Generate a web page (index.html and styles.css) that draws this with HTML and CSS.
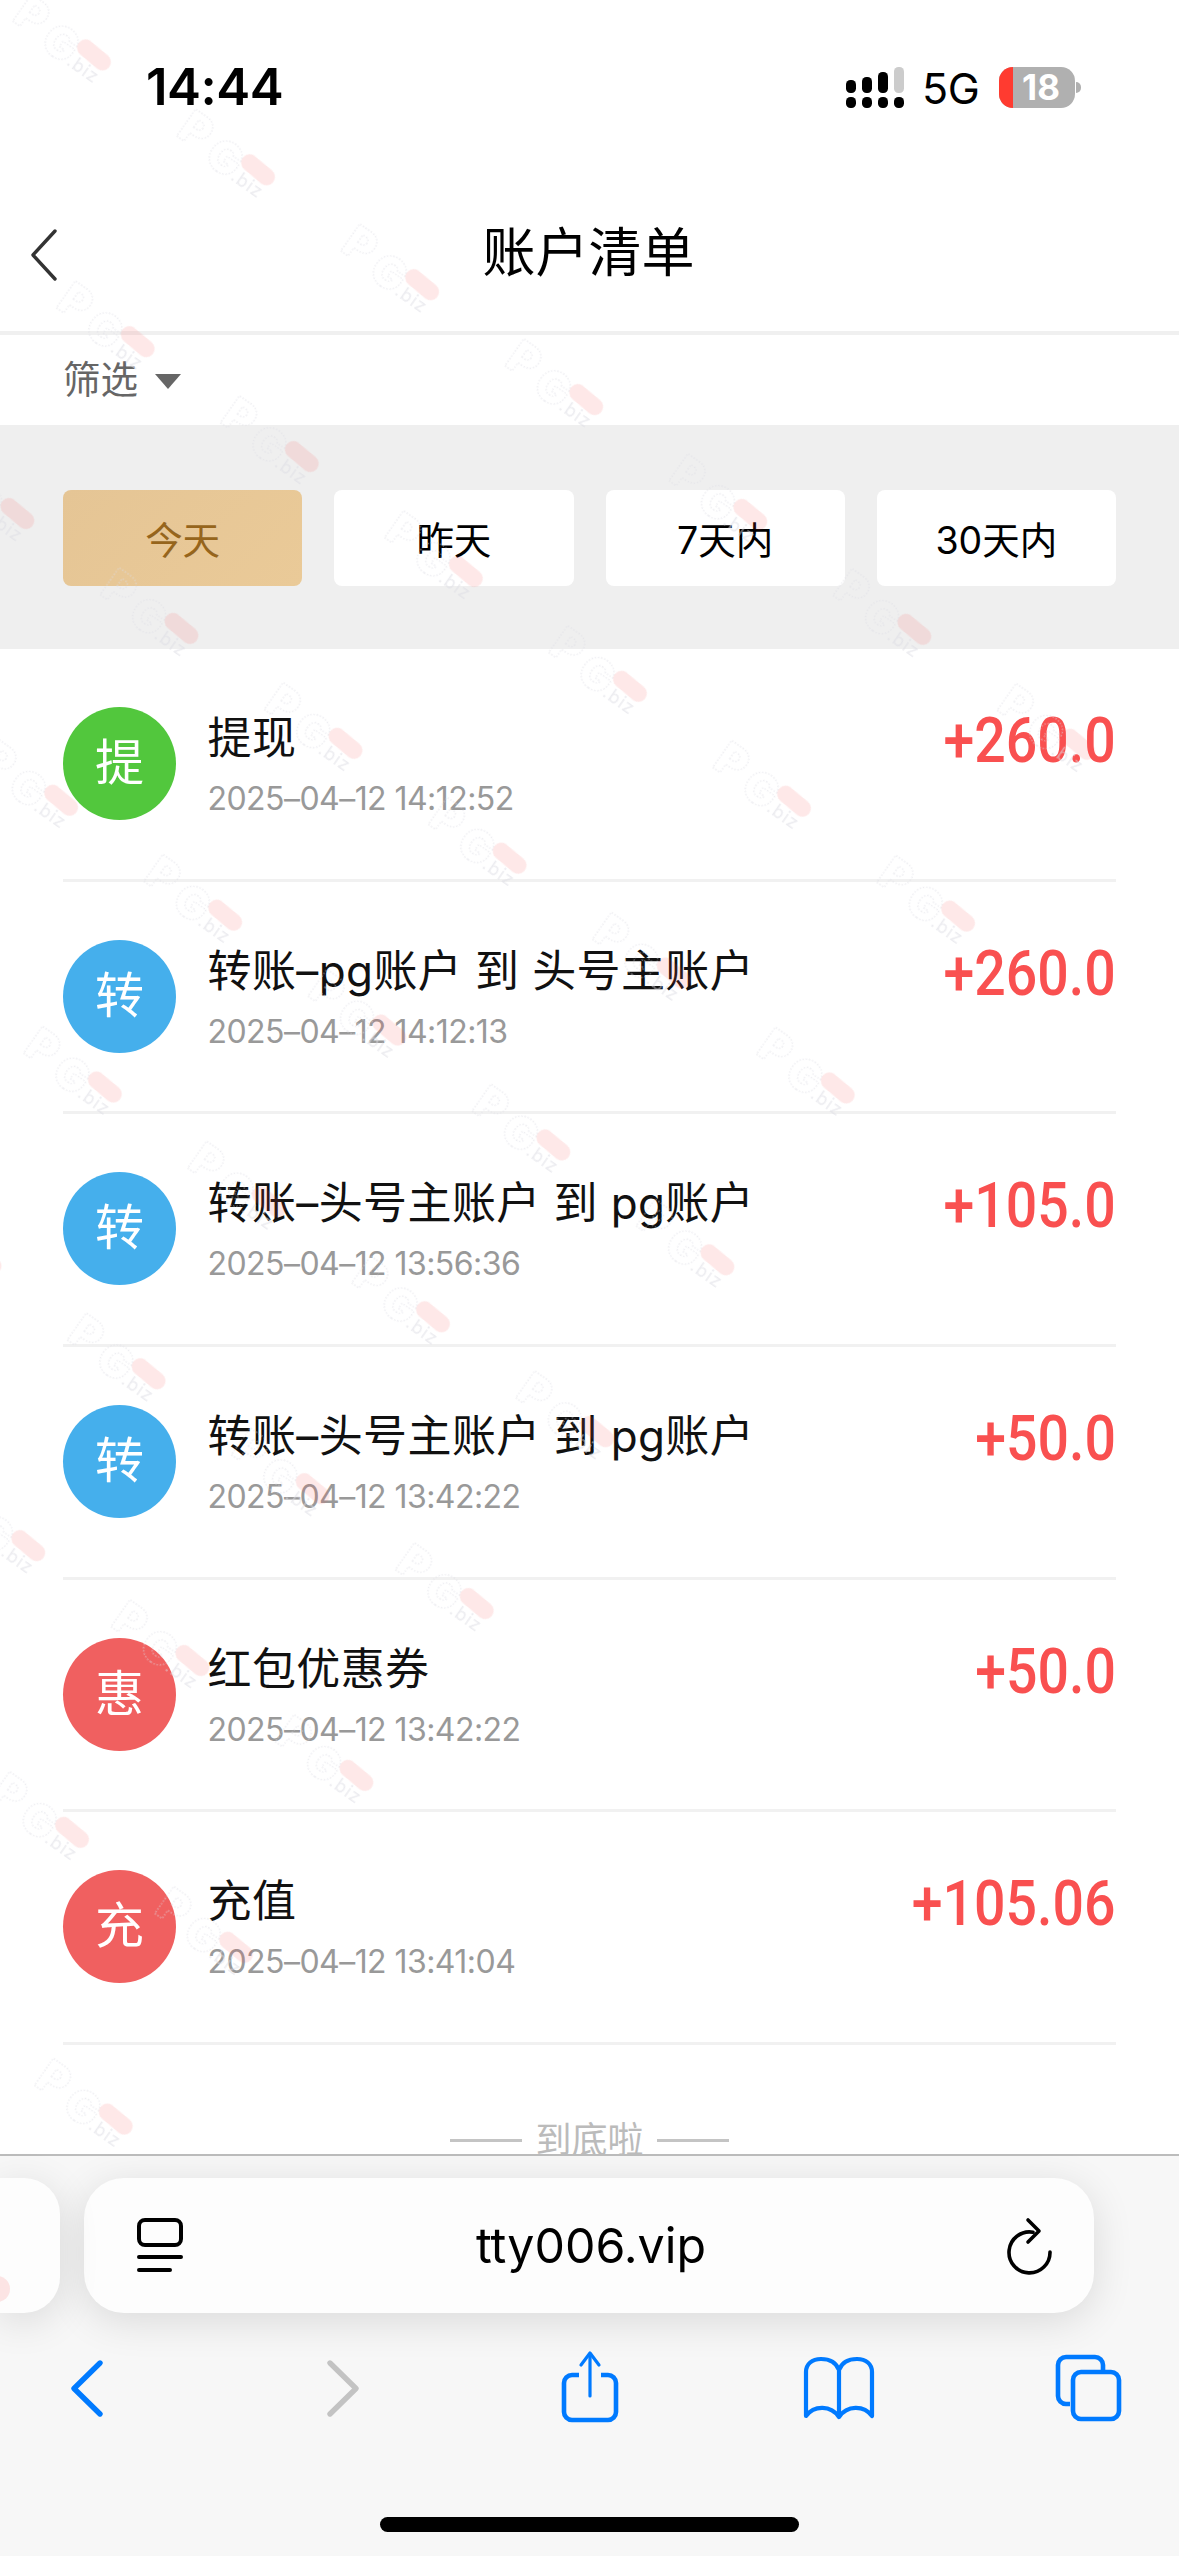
FILE: index.html
```html
<!DOCTYPE html>
<html lang="zh-CN">
<head>
<meta charset="utf-8">
<title>账户清单</title>
<link rel="stylesheet" href="styles.css">
</head>
<body>
<div class="phone">
  <main class="webview">
    <div class="statusbar">
      <span class="time">14:44</span>
      <div class="status-right">
        <svg class="signal" width="60" height="42" viewBox="0 0 60 42" aria-hidden="true">
          <rect x="0" y="13" width="10" height="13" rx="4.5" fill="#000"/>
          <rect x="16" y="10" width="10" height="16" rx="4.5" fill="#000"/>
          <rect x="32" y="5" width="10" height="21" rx="4.5" fill="#000"/>
          <rect x="48" y="0" width="10" height="26" rx="4.5" fill="#ccc"/>
          <rect x="0" y="30" width="10" height="11" rx="4.5" fill="#000"/>
          <rect x="16" y="30" width="10" height="11" rx="4.5" fill="#000"/>
          <rect x="32" y="30" width="10" height="11" rx="4.5" fill="#000"/>
          <rect x="48" y="30" width="10" height="11" rx="4.5" fill="#000"/>
        </svg>
        <span class="net">5G</span>
        <div class="battery"><span class="battery-level"></span><span class="battery-num">18</span></div>
        <span class="battery-nub"></span>
      </div>
    </div>

    <header class="navbar">
      <svg class="nav-back" width="28" height="52" viewBox="0 0 28 52" aria-hidden="true"><path d="M25 2 L3 26 L25 50" fill="none" stroke="#333" stroke-width="3.4" stroke-linecap="round" stroke-linejoin="round"/></svg>
      <h1 class="nav-title">账户清单</h1>
    </header>

    <div class="filter">
      <span class="filter-label">筛选</span>
      <span class="filter-caret"></span>
    </div>

    <div class="ranges">
      <span class="range range-active">今天</span>
      <span class="range">昨天</span>
      <span class="range">7天内</span>
      <span class="range">30天内</span>
    </div>

    <ul class="records">
      <li class="record">
        <span class="badge badge-green">提</span>
        <div class="record-body"><div class="record-title">提现</div><div class="record-date">2025–04–12 14:12:52</div></div>
        <span class="record-amount">+260.0</span>
      </li>
      <li class="record">
        <span class="badge badge-blue">转</span>
        <div class="record-body"><div class="record-title">转账–pg账户 到 头号主账户</div><div class="record-date">2025–04–12 14:12:13</div></div>
        <span class="record-amount">+260.0</span>
      </li>
      <li class="record">
        <span class="badge badge-blue">转</span>
        <div class="record-body"><div class="record-title">转账–头号主账户 到 pg账户</div><div class="record-date">2025–04–12 13:56:36</div></div>
        <span class="record-amount">+105.0</span>
      </li>
      <li class="record">
        <span class="badge badge-blue">转</span>
        <div class="record-body"><div class="record-title">转账–头号主账户 到 pg账户</div><div class="record-date">2025–04–12 13:42:22</div></div>
        <span class="record-amount">+50.0</span>
      </li>
      <li class="record">
        <span class="badge badge-red">惠</span>
        <div class="record-body"><div class="record-title">红包优惠券</div><div class="record-date">2025–04–12 13:42:22</div></div>
        <span class="record-amount">+50.0</span>
      </li>
      <li class="record">
        <span class="badge badge-red">充</span>
        <div class="record-body"><div class="record-title">充值</div><div class="record-date">2025–04–12 13:41:04</div></div>
        <span class="record-amount">+105.06</span>
      </li>
    </ul>

    <div class="end-note"><span class="end-line"></span><span>到底啦</span><span class="end-line"></span></div>

    <svg class="watermark" width="1179" height="2154" aria-hidden="true">
      <defs>
        <pattern id="wm" patternUnits="userSpaceOnUse" x="-120" y="-100" width="200.3" height="209.8">
          <g transform="translate(120 100)">
            <text class="wm-letters" x="-88" y="19">P</text>
            <text class="wm-letters" x="-51" y="25">G</text>
            <text class="wm-biz" x="-18" y="24">.biz</text>
            <rect class="wm-pill" x="-19.5" y="-8.5" width="39" height="17" rx="8.5" transform="rotate(5)"/>
          </g>
        </pattern>
      </defs>
      <g transform="translate(94 55) rotate(35)">
        <rect x="-120" y="-100" width="1402" height="1888" fill="url(#wm)"/>
      </g>
    </svg>
  </main>

  <footer class="safari">
    <div class="tabs-row">
      <div class="tab-peek"></div>
      <div class="address">
        <svg class="tab-icon" width="46" height="56" viewBox="0 0 46 56" aria-hidden="true">
          <rect x="2" y="2" width="42" height="25" rx="6" fill="none" stroke="#000" stroke-width="4"/>
          <path d="M2 39 H44 M2 52 H33" stroke="#000" stroke-width="4" stroke-linecap="round"/>
        </svg>
        <span class="url">tty006.vip</span>
        <svg class="reload-icon" width="50" height="60" viewBox="0 0 50 60" aria-hidden="true">
          <path d="M28 16.2 A20.5 20.5 0 1 0 45 36" fill="none" stroke="#000" stroke-width="3.6" stroke-linecap="round"/>
          <path d="M23 4 L34 15 L23 26" fill="none" stroke="#000" stroke-width="3.6" stroke-linecap="round" stroke-linejoin="round"/>
        </svg>
      </div>
    </div>
    <nav class="toolbar">
      <svg width="70" height="76" viewBox="0 0 70 76" aria-hidden="true"><path d="M48 13 L22 38.5 L48 64" fill="none" stroke="#007aff" stroke-width="5.4" stroke-linecap="round" stroke-linejoin="round"/></svg>
      <svg width="70" height="76" viewBox="0 0 70 76" aria-hidden="true"><path d="M28 13 L54 38.5 L28 64" fill="none" stroke="#c3c3c3" stroke-width="5.4" stroke-linecap="round" stroke-linejoin="round"/></svg>
      <svg width="70" height="76" viewBox="0 0 70 76" aria-hidden="true">
        <path d="M26 25 H19 a8 8 0 0 0 -8 8 V62 a8 8 0 0 0 8 8 H55 a8 8 0 0 0 8 -8 V33 a8 8 0 0 0 -8 -8 H48" fill="none" stroke="#007aff" stroke-width="4.6"/>
        <path d="M37 4 V46" stroke="#007aff" stroke-width="3.2" stroke-linecap="round"/>
        <path d="M28 15 L37 3 L46 15" fill="none" stroke="#007aff" stroke-width="3.2" stroke-linecap="round" stroke-linejoin="round"/>
      </svg>
      <svg width="70" height="76" viewBox="0 0 70 76" aria-hidden="true">
        <path d="M36 20 C33 12 26 9 18 9 C9 9 3 14 3 22 V66 C11 55 28 55 36 67 C44 55 61 55 69 66 V22 C69 14 63 9 54 9 C46 9 39 12 36 20 Z M36 20 V67" fill="none" stroke="#007aff" stroke-width="4.2" stroke-linejoin="round"/>
      </svg>
      <svg width="70" height="76" viewBox="0 0 70 76" aria-hidden="true">
        <path d="M17 54 H13 a8 8 0 0 1 -8 -8 V15 a8 8 0 0 1 8 -8 H42 a8 8 0 0 1 8 8 V20" fill="none" stroke="#007aff" stroke-width="4.6"/>
        <rect x="20" y="22" width="46" height="47" rx="8" fill="none" stroke="#007aff" stroke-width="4.6"/>
      </svg>
    </nav>
    <div class="home-indicator"></div>
  </footer>
</div>
</body>
</html>
```
FILE: styles.css
```css
* { box-sizing: border-box; }
html, body { margin: 0; padding: 0; }
body {
  width: 1179px;
  height: 2556px;
  overflow: hidden;
  background: #fff;
  font-family: "Inter", "Noto Sans CJK SC", sans-serif;
  color: #000;
}
.phone { display: flex; flex-direction: column; width: 1179px; height: 2556px; }

.webview { position: relative; height: 2154px; overflow: hidden; background: #fff; flex: none; }

.statusbar {
  height: 174px;
  display: flex;
  justify-content: space-between;
  align-items: flex-start;
  padding: 0 98px 0 146px;
}
.time { font-size: 51px; font-weight: 600; line-height: 50px; margin-top: 62px; letter-spacing: -0.5px; }
.status-right { display: flex; align-items: flex-start; margin-top: 67px; }
.signal { display: block; }
.net { width: 57px; font-size: 43px; line-height: 42px; margin-left: 16px; letter-spacing: -0.5px; white-space: nowrap; }
.battery {
  position: relative;
  width: 76px;
  height: 41px;
  margin-left: 20px;
  border-radius: 14px;
  background: #b0b0b0;
  overflow: hidden;
  display: flex;
  align-items: center;
  justify-content: center;
}
.battery-level { position: absolute; left: 0; top: 0; bottom: 0; width: 14px; background: #ff3b30; }
.battery-num { position: relative; margin-left: 8px; color: #fff; font-size: 35px; font-weight: 700; line-height: 41px; }
.battery-nub { width: 5px; height: 11px; margin: 15px 0 0 1px; background: #b0b0b0; border-radius: 0 6px 6px 0; }

.navbar {
  position: relative;
  height: 161px;
  display: flex;
  align-items: center;
  justify-content: center;
  border-bottom: 4px solid #f0f0f0;
}
.nav-back { position: absolute; left: 30px; top: 55px; }
.nav-title { margin: 0 0 0 -2px; font-size: 53px; font-weight: 400; line-height: 60px; }

.filter { height: 90px; display: flex; align-items: center; padding-left: 63px; }
.filter-label { font-size: 37.5px; line-height: 50px; color: #666; }
.filter-caret {
  width: 0;
  height: 0;
  margin: 2px 0 0 17px;
  border-left: 13px solid transparent;
  border-right: 13px solid transparent;
  border-top: 15px solid #666;
}

.ranges {
  height: 224px;
  padding: 65px 63px 63px;
  background: #efefef;
  display: grid;
  grid-template-columns: repeat(4, 1fr);
  column-gap: 32px;
}
.range {
  display: flex;
  align-items: center;
  justify-content: center;
  background: #fff;
  border-radius: 8px;
  font-size: 37.5px;
  padding-bottom: 2px;
}
.range-active { background: linear-gradient(135deg, #e5c595, #eaca98); color: #96651c; }

.records { list-style: none; margin: 0 63px; padding: 0; }
.record {
  height: 232.7px;
  padding-top: 58px;
  display: flex;
  align-items: flex-start;
  border-bottom: 3px solid #f1f1f1;
}
.badge {
  width: 113px;
  height: 113px;
  flex: none;
  border-radius: 50%;
  display: flex;
  align-items: center;
  justify-content: center;
  color: #fff;
  font-size: 49px;
  line-height: 1;
  padding-bottom: 2px;
}
.badge-green { background: #52c73d; }
.badge-blue { background: #45afec; }
.badge-red { background: #f06060; }
.record-body { flex: 1; margin-left: 31.5px; }
.record-title { font-size: 44px; line-height: 62px; color: #111; white-space: nowrap; letter-spacing: 0.4px; }
.record-date { margin-top: 2px; font-size: 32px; line-height: 56px; color: #999; white-space: nowrap; letter-spacing: -0.55px; }
.record-amount {
  font-family: "Roboto", sans-serif;
  font-size: 63px;
  font-weight: 500;
  line-height: 64px;
  margin-top: 2px;
  color: #f95050;
  transform: scaleX(0.88);
  transform-origin: right center;
}

.end-note {
  margin-top: 70px;
  display: flex;
  justify-content: center;
  align-items: center;
  gap: 13px;
  color: #bbb;
  font-size: 36px;
  line-height: 50px;
}
.end-line { width: 72px; height: 3px; background: #c4c4c4; }

.watermark { position: absolute; left: 0; top: 0; pointer-events: none; }
.wm-letters {
  font-family: "Inter", sans-serif;
  font-size: 45px;
  font-weight: 900;
  fill: none;
  stroke: #dcdce4;
  stroke-width: 1.4;
  stroke-dasharray: 1.4 1.8;
  opacity: 0.5;
}
.wm-biz { font-family: "Inter", sans-serif; font-size: 18px; letter-spacing: 1px; fill: #dcdce4; opacity: 0.55; }
.wm-pill { fill: #f95050; opacity: 0.13; }

.safari {
  flex: 1;
  background: #f7f7f7;
  border-top: 2px solid #bcbcbc;
  display: flex;
  flex-direction: column;
  align-items: stretch;
}
.tabs-row { display: flex; gap: 24px; padding-top: 22px; }
.tab-peek {
  position: relative;
  width: 60px;
  height: 135px;
  background: #fdfdfd;
  border-radius: 0 36px 36px 0;
  box-shadow: 0 8px 40px rgba(0, 0, 0, 0.12);
  overflow: hidden;
}
.tab-peek::after {
  content: "";
  position: absolute;
  left: -16px;
  top: 98px;
  width: 26px;
  height: 26px;
  border-radius: 50%;
  background: #f95050;
  opacity: 0.14;
}
.address {
  width: 1010px;
  height: 135px;
  background: #fdfdfd;
  border-radius: 40px;
  box-shadow: 0 8px 40px rgba(0, 0, 0, 0.12);
  display: flex;
  align-items: center;
  justify-content: space-between;
  padding: 0 39px 0 53px;
}
.url { font-size: 48.3px; line-height: 60px; margin-right: 6px; }
.toolbar {
  display: flex;
  justify-content: space-between;
  padding: 37px 56px 0 52px;
}
.toolbar svg { display: block; overflow: visible; }
.home-indicator {
  width: 419px;
  height: 15px;
  margin: 91px auto 0;
  border-radius: 8px;
  background: #000;
}
```
